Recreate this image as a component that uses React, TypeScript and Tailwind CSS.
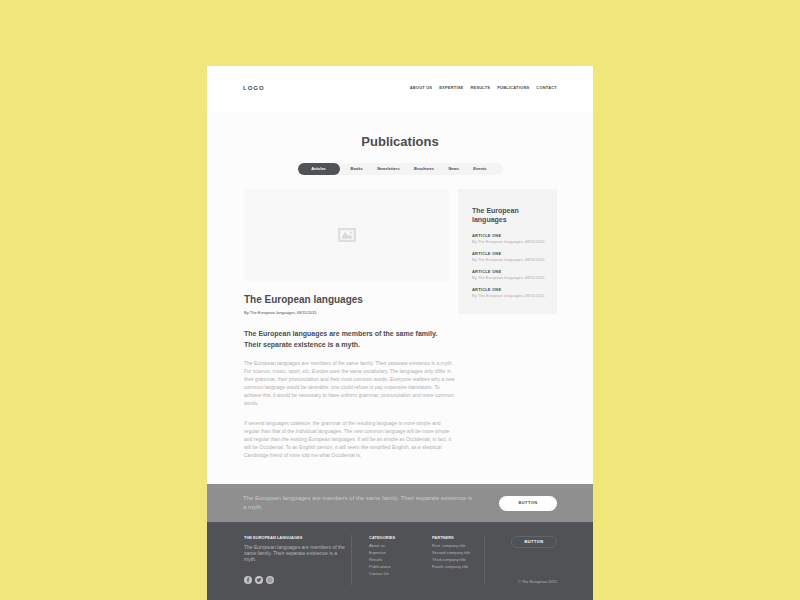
import React from 'react';

const navLinks = ['ABOUT US', 'EXPERTISE', 'RESULTS', 'PUBLICATIONS', 'CONTACT'];
const tabs = ['Articles', 'Books', 'Newsletters', 'Brochures', 'News', 'Events'];
const articles = [1, 2, 3, 4];
const categories = ['About us', 'Expertise', 'Results', 'Publications', 'Contact Us'];
const partners = [
  'First  company title',
  'Second company title',
  'Third company title',
  'Fourth company title',
];

function PictureIcon() {
  return (
    <svg viewBox="0 0 18 14" className="h-[14px] w-[18px]" aria-hidden="true">
      <path
        fill="#dedede"
        fillRule="evenodd"
        d="M1 0h16a1 1 0 0 1 1 1v12a1 1 0 0 1-1 1H1a1 1 0 0 1-1-1V1a1 1 0 0 1 1-1zM2.200 2.200v9.600h13.600V2.200z"
      />
      <path fill="#dadada" d="M3.800 10.800V9.200L7 3.800l3.200 4 1.600-1.400L14.200 9v1.800z" />
      <circle cx="13" cy="4.600" r="1.200" fill="#dadada" />
    </svg>
  );
}

function FacebookIcon() {
  return (
    <svg viewBox="0 0 16 16" className="size-2" aria-hidden="true">
      <circle cx="8" cy="8" r="8" fill="#c4c4c5" />
      <path
        fill="#515256"
        d="M7 13V8.6H5.6V6.8H7V5.6C7 4 7.9 3.2 9.3 3.2h1.2v1.7h-.8c-.6 0-.8.3-.8.9v1h1.6l-.2 1.8H8.9V13z"
      />
    </svg>
  );
}

function TwitterIcon() {
  return (
    <svg viewBox="0 0 16 16" className="size-2" aria-hidden="true">
      <circle cx="8" cy="8" r="8" fill="#c4c4c5" />
      <path
        fill="#515256"
        d="M12.6 5.2l-1 1c0 3.400-2.300 5.800-5.300 5.800-1.100 0-2.100-.3-2.900-.8 1 0 1.900-.3 2.600-.8-.8-.1-1.500-.6-1.800-1.300h.8C4.200 8.800 3.600 8 3.600 7.100l.8.200C3.600 6.600 3.500 5.600 4 4.700c1 1.200 2.300 1.900 3.900 2-.3-1.400.7-2.500 1.900-2.500.6 0 1.100.2 1.400.6l1.200-.5-.6 1z"
      />
    </svg>
  );
}

function InstagramIcon() {
  return (
    <svg viewBox="0 0 16 16" className="size-2" aria-hidden="true">
      <circle cx="8" cy="8" r="8" fill="#c4c4c5" />
      <rect x="4" y="4" width="8" height="8" rx="2" fill="none" stroke="#737477" strokeWidth="1.200" />
      <circle cx="8" cy="8" r="2" fill="none" stroke="#737477" strokeWidth="1.200" />
    </svg>
  );
}

function FooterList({ title, items }: { title: string; items: string[] }) {
  return (
    <nav aria-label={title}>
      <h3 className="text-[4px] leading-[6px] font-bold text-[#ececec]">{title}</h3>
      <ul className="mt-px text-[4px] leading-[7px] whitespace-pre text-[#b4b4b6]">
        {items.map((item) => (
          <li key={item}>
            <a href="#" className="block">{item}</a>
          </li>
        ))}
      </ul>
    </nav>
  );
}

export default function App() {
  return (
    <div className="min-h-screen bg-[#f1e679] pt-[66px] font-['Liberation_Sans',Arial,sans-serif] text-[#4b4c50]">
      <div className="mx-auto max-w-[386px] bg-[#fcfcfc]">
        <header className="flex h-[46px] items-center justify-between bg-white px-9 pb-0.5">
          <a href="#" className="text-[6px] leading-2 font-bold tracking-[1px]">LOGO</a>
          <nav aria-label="Main" className="flex gap-[7px] text-[4px] leading-2 font-bold tracking-wider">
            {navLinks.map((label) => (
              <a key={label} href="#">{label}</a>
            ))}
          </nav>
        </header>

        <main className="px-9 pt-5 pb-[25px]">
          <h1 className="text-center text-[13px] leading-5 font-bold">Publications</h1>
          <div
            role="tablist"
            className="mx-auto mt-[11px] flex h-3 w-[205px] items-center rounded-full bg-[#f4f4f4] text-[4px] leading-2 font-bold"
          >
            <button role="tab" aria-selected="true" className="h-3 w-[42px] rounded-full bg-[#515256] text-white">
              {tabs[0]}
            </button>
            <div className="flex flex-1 justify-between pr-4 pl-[11px]">
              {tabs.slice(1).map((tab) => (
                <button key={tab} role="tab" aria-selected="false">{tab}</button>
              ))}
            </div>
          </div>

          <div className="mt-3.5 flex items-start gap-[9px] pl-px">
            <article className="min-w-0 flex-1">
              <div className="flex h-[92px] items-center justify-center bg-[#f8f8f8]">
                <PictureIcon />
              </div>
              <h2 className="mt-3 text-[10px] leading-[14px] font-bold">The European languages</h2>
              <p className="mt-[3px] text-[4px] leading-[6px]">By The European languages, 08/11/2015</p>
              <h3 className="mt-3 text-[7px] leading-[11px] font-bold whitespace-nowrap">
                The European languages are members of the same family.
                <br />
                Their separate existence is a myth.
              </h3>
              <div className="mt-[9px] flex flex-col gap-3 text-[5px] leading-2 whitespace-nowrap text-[#b0b0b0]">
                <p>
                  The European languages are members of the same family. Their separate existence is a myth.
                  <br />
                  For science, music, sport, etc, Europe uses the same vocabulary. The languages only differ in
                  <br />
                  their grammar, their pronunciation and their most common words. Everyone realizes why a new
                  <br />
                  common language would be desirable: one could refuse to pay expensive translators. To
                  <br />
                  achieve this, it would be necessary to have uniform grammar, pronunciation and more common
                  <br />
                  words.
                </p>
                <p>
                  If several languages coalesce, the grammar of the resulting language is more simple and
                  <br />
                  regular than that of the individual languages. The new common language will be more simple
                  <br />
                  and regular than the existing European languages. It will be as simple as Occidental; in fact, it
                  <br />
                  will be Occidental. To an English person, it will seem like simplified English, as a skeptical
                  <br />
                  Cambridge friend of mine told me what Occidental is.
                </p>
              </div>
            </article>

            <aside className="w-[99px] shrink-0 bg-[#f4f4f4] pt-[17px] pb-[15px] pl-3.5">
              <h2 className="text-[7px] leading-[9px] font-bold">
                The European
                <br />
                languages
              </h2>
              <ul className="mt-[9px] flex flex-col gap-1.5 text-[4px] leading-[6px] whitespace-nowrap">
                {articles.map((id) => (
                  <li key={id}>
                    <a href="#" className="block font-bold tracking-wider">ARTICLE ONE</a>
                    <p className="text-[#adadad]">By The European languages, 08/11/2015</p>
                  </li>
                ))}
              </ul>
            </aside>
          </div>
        </main>

        <section className="flex h-[38px] items-center justify-between bg-[#8f8f8f] px-9">
          <p className="text-[6px] leading-[9px] whitespace-nowrap text-[#c9c9c9]">
            The European languages are members of the same family. Their separate existence is
            <br />a myth.
          </p>
          <button className="h-[15px] w-[58px] rounded-full bg-white text-[4px] leading-2 font-bold tracking-widest">
            BUTTON
          </button>
        </section>

        <footer className="flex h-[78px] bg-[#515256] pt-[13px] pr-9 pl-[37px]">
          <div className="h-[50px] w-[108px] border-r border-[#636468]">
            <h3 className="text-[4px] leading-[6px] font-bold text-[#ececec]">THE EUROPEAN LANGUAGES</h3>
            <p className="mt-[3px] text-[5px] leading-[6px] whitespace-nowrap text-[#b4b4b6]">
              The European languages are members of the
              <br />
              same family. Their separate existence is a
              <br />
              myth.
            </p>
            <div className="mt-3.5 flex gap-[3px]">
              <a href="#" aria-label="Facebook"><FacebookIcon /></a>
              <a href="#" aria-label="Twitter"><TwitterIcon /></a>
              <a href="#" aria-label="Instagram"><InstagramIcon /></a>
            </div>
          </div>
          <div className="flex h-[50px] w-[133px] border-r border-[#636468] pl-[17px]">
            <div className="w-[63px]">
              <FooterList title="CATEGORIES" items={categories} />
            </div>
            <FooterList title="PARTNERS" items={partners} />
          </div>
          <div className="flex h-[50px] flex-1 flex-col items-end justify-between">
            <button className="mt-px h-3 w-[46px] rounded-full border border-[#636468] text-[4px] leading-2 font-bold tracking-widest text-white">
              BUTTON
            </button>
            <p className="text-[4px] leading-[6px] text-[#b4b4b6]">© The European 2015</p>
          </div>
        </footer>
      </div>
    </div>
  );
}
